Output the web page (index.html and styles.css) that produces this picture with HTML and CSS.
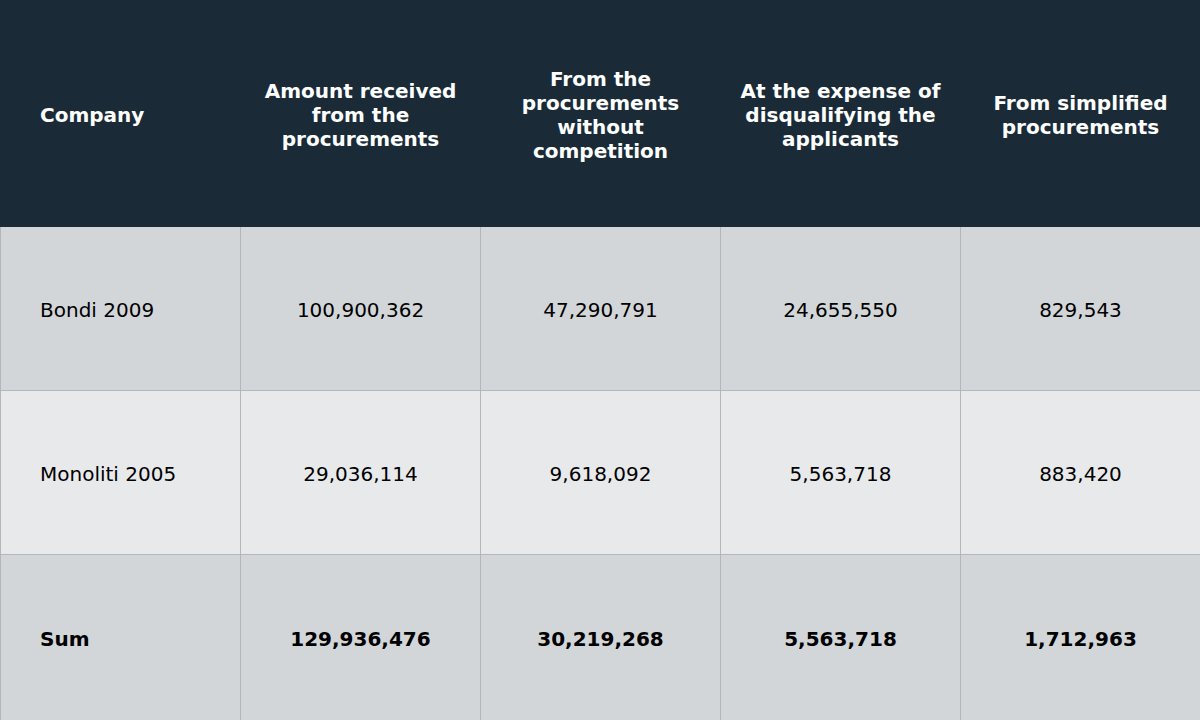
FILE: index.html
```html
<!DOCTYPE html>
<html>
<head>
<meta charset="utf-8">
<link rel="stylesheet" href="styles.css">
</head>
<body>
<table class="data">
  <thead>
    <tr class="head">
      <th class="first">Company</th>
      <th>Amount received from the procurements</th>
      <th>From the procurements without competition</th>
      <th>At the expense of disqualifying the applicants</th>
      <th>From simplified procurements</th>
    </tr>
  </thead>
  <tbody>
    <tr class="row dark">
      <td class="first">Bondi 2009</td>
      <td>100,900,362</td>
      <td>47,290,791</td>
      <td>24,655,550</td>
      <td>829,543</td>
    </tr>
    <tr class="row light">
      <td class="first">Monoliti 2005</td>
      <td>29,036,114</td>
      <td>9,618,092</td>
      <td>5,563,718</td>
      <td>883,420</td>
    </tr>
    <tr class="row dark sum">
      <td class="first">Sum</td>
      <td>129,936,476</td>
      <td>30,219,268</td>
      <td>5,563,718</td>
      <td>1,712,963</td>
    </tr>
  </tbody>
</table>
</body>
</html>
```

FILE: styles.css
```css
html, body {
  margin: 0;
  padding: 0;
  background: #ffffff;
}

.data {
  width: 1200px;
  border-collapse: collapse;
  table-layout: fixed;
  font-family: "DejaVu Sans", sans-serif;
  font-size: 20px;
  line-height: 24px;
  color: #000000;
}

.data th,
.data td {
  width: 240px;
  padding: 2px 20px 0 20px;
  text-align: center;
  vertical-align: middle;
  box-sizing: border-box;
}

.data .first {
  text-align: left;
  padding-left: 39px;
}

.head {
  height: 226px;
  background: #1a2b37;
}

.head th {
  color: #ffffff;
  font-weight: bold;
  padding-left: 18px;
  padding-right: 18px;
  border: 1px solid #1a2b37;
  border-bottom: none;
}

.head th.first {
  padding-left: 39px;
}

.row td {
  border: 1px solid #b3b7bb;
  border-top: none;
}

.row.dark:first-child td {
  padding-top: 4px;
}

.row {
  height: 164px;
}

.row.sum {
  height: 167px;
}

.dark {
  background: #d2d6d9;
}

.light {
  background: #e8e9eb;
}

.sum td {
  font-weight: bold;
}
```
